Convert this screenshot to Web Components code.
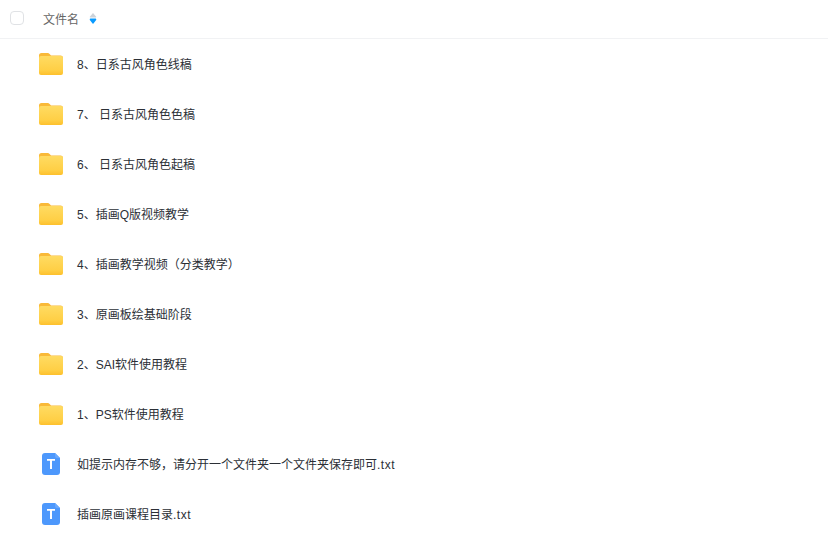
<!DOCTYPE html>
<html lang="zh">
<head>
<meta charset="utf-8">
<title>文件列表</title>
<style>
    html, body { margin: 0; background: #fff; }
    body { font: 12px "Liberation Sans", "Noto Sans CJK SC", sans-serif; color: #2b2f36; }
    .ext { letter-spacing: .5px; }
</style>
</head>
<body>
<file-list>
    <file-row type="folder">8、日系古风角色线稿</file-row>
    <file-row type="folder">7、 日系古风角色色稿</file-row>
    <file-row type="folder">6、 日系古风角色起稿</file-row>
    <file-row type="folder">5、插画Q版视频教学</file-row>
    <file-row type="folder">4、插画教学视频（分类教学）</file-row>
    <file-row type="folder">3、原画板绘基础阶段</file-row>
    <file-row type="folder">2、SAI软件使用教程</file-row>
    <file-row type="folder">1、PS软件使用教程</file-row>
    <file-row type="txt">如提示内存不够，请分开一个文件夹一个文件夹保存即可<span class="ext">.txt</span></file-row>
    <file-row type="txt">插画原画课程目录<span class="ext">.txt</span></file-row>
</file-list>

<script>
(() => {
    const icons = {
        folder: `<svg width="24" height="22" viewBox="0 0 24 22">
            <path d="M0 2.500A2.500 2.500 0 0 1 2.500 0h6.200c.8 0 1.400.3 1.900.9L12 2.500h9.500A2.500 2.500 0 0 1 24 5v3H0z" fill="#f9b938"/>
            <rect y="3" width="24" height="19" rx="2" fill="url(#fg)"/>
            <defs><linearGradient id="fg" x1="0" y1="0" x2="0" y2="1">
                <stop offset="0" stop-color="#ffdb62"/><stop offset=".75" stop-color="#ffcf45"/><stop offset="1" stop-color="#fdc02c"/>
            </linearGradient></defs>
        </svg>`,
        txt: `<svg width="18" height="22" viewBox="0 0 18 22">
            <path d="M3 0h10L18 5V19a3 3 0 0 1-3 3H3a3 3 0 0 1-3-3V3a3 3 0 0 1 3-3z" fill="#4d98fc"/>
            <path d="M13 0L18 5h-3a2 2 0 0 1-2-2z" fill="#6aa9fd"/>
            <path d="M5 6h8v1.800h-3V16H8V7.800H5z" fill="#fff"/>
        </svg>`
    }

    class FileList extends HTMLElement {
        constructor() {
            super()
            this.attachShadow({mode: 'open'}).innerHTML = `
                <style>
                    :host { display: block; width: 828px; }
                    header {
                        display: flex;
                        align-items: center;
                        height: 36px;
                        padding: 0 0 2px 10px;
                        border-bottom: 1px solid #f1f2f4;
                        color: #666;
                    }
                    .check {
                        box-sizing: border-box;
                        width: 14px;
                        height: 14px;
                        border: 1px solid #e0e2e5;
                        border-radius: 4px;
                        margin-right: 19px;
                    }
                    .sort { margin-left: 10px; display: block; }
                </style>
                <header>
                    <span class="check"></span>
                    <span>文件名</span>
                    <svg class="sort" width="8" height="12" viewBox="0 0 8 12">
                        <path d="M4 1L7.200 4.700Q7.500 5.500 6.700 5.500H1.300Q.5 5.500 .8 4.700z" fill="#ccd2d9"/>
                        <path d="M4 12L.8 8Q.5 6.500 1.300 6.500H6.700Q7.500 6.500 7.200 8z" fill="#0a9bff"/>
                    </svg>
                </header>
                <slot></slot>`
        }
    }

    class FileRow extends HTMLElement {
        constructor() {
            super()
            this.attachShadow({mode: 'open'}).innerHTML = `
                <style>
                    :host { display: flex; align-items: center; height: 50px; }
                    .icon { display: flex; justify-content: center; width: 24px; margin: 0 14px 0 39px; }
                    .name { padding-bottom: 2px; }
                </style>
                <span class="icon"></span>
                <span class="name"><slot></slot></span>`
        }
        connectedCallback() {
            this.shadowRoot.querySelector('.icon').innerHTML = icons[this.getAttribute('type')]
        }
    }

    customElements.define('file-list', FileList)
    customElements.define('file-row', FileRow)
})()
</script>
</body>
</html>
